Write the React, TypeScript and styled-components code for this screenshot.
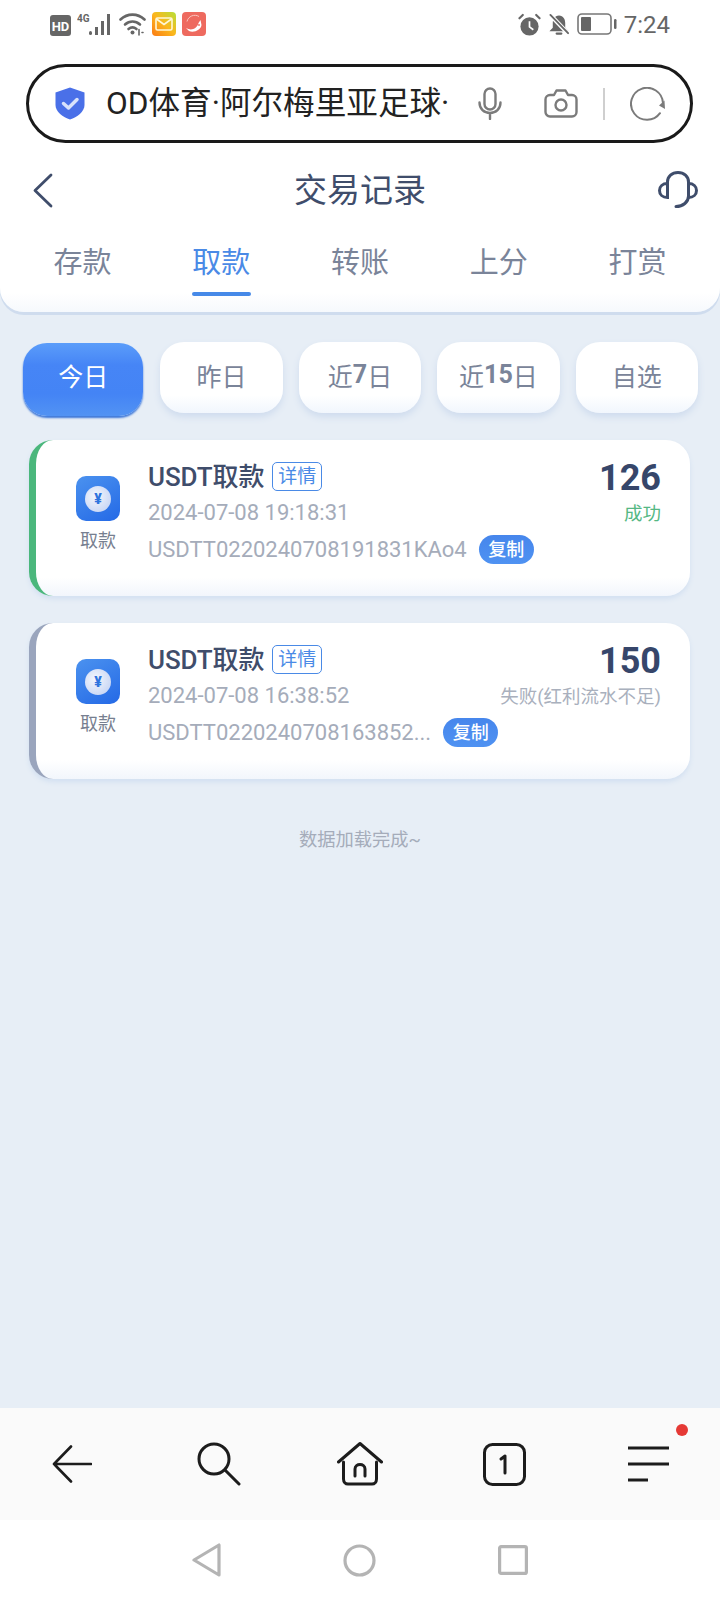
import { createGlobalStyle, styled } from "styled-components";

const GlobalStyle = createGlobalStyle`
  html, body {
    margin: 0;
    padding: 0;
    background: #e7eef6;
    font-family: Roboto, "Noto Sans CJK SC", sans-serif;
  }
  * { box-sizing: border-box; }
`;

const Page = styled.div`
  width: 720px;
  height: 1600px;
  display: flex;
  flex-direction: column;
  background: #e7eef6;
  overflow: hidden;
`;

const StatusBar = styled.div`
  height: 64px;
  flex: none;
  background: #fff;
  display: flex;
  justify-content: space-between;
  padding: 12px 50px 0;
  color: #666;
`;

const StatusGroup = styled.div<{ $gap: number }>`
  display: flex;
  align-items: flex-start;
  gap: ${(p) => p.$gap}px;
`;

const Clock = styled.span`
  font-size: 24px;
  line-height: 26px;
  color: #666;
`;

const UrlWrap = styled.div`
  flex: none;
  background: #fff;
  padding: 0 27px 7px 26px;
`;

const UrlBar = styled.div`
  height: 79px;
  border: 3px solid #1a1a1a;
  border-radius: 40px;
  display: flex;
  align-items: center;
  padding-left: 26px;
`;

const UrlText = styled.div`
  width: 352px;
  margin-left: 21px;
  white-space: nowrap;
  font-size: 31.6px;
  line-height: 42px;
  color: #222;
`;

const UrlActions = styled.div`
  display: flex;
  align-items: center;
  margin-left: 20px;
`;

const MicSlot = styled.span`
  display: flex;
  margin-right: 42px;
`;

const UrlDivider = styled.span`
  width: 2px;
  height: 32px;
  background: #cfcfcf;
  margin: 0 25px;
`;

const Header = styled.div`
  flex: none;
  height: 162px;
  background: linear-gradient(#fff 88%, #f6f9fd);
  border-radius: 0 0 24px 24px;
  box-shadow: 0 3px 0 #cfdcee;
`;

const TopBar = styled.div`
  height: 80px;
  display: grid;
  grid-template-columns: 1fr auto 1fr;
  align-items: center;
  padding: 0 22px;
`;

const BackSlot = styled.div`
  display: flex;
  margin-left: 11px;
`;

const Title = styled.h1`
  margin: 0 0 4px;
  font-size: 33px;
  font-weight: 400;
  color: #3f4d6b;
`;

const HeadsetSlot = styled.div`
  justify-self: end;
  display: flex;
`;

const Tabs = styled.div`
  display: grid;
  grid-template-columns: repeat(5, 1fr);
  padding: 0 13px;
`;

const Tab = styled.div<{ $active?: boolean }>`
  position: relative;
  height: 66px;
  line-height: 66px;
  text-align: center;
  font-size: 29px;
  color: ${(p) => (p.$active ? "#4a8ae6" : "#7a8499")};

  &::after {
    content: "";
    display: ${(p) => (p.$active ? "block" : "none")};
    position: absolute;
    left: 50%;
    bottom: 0;
    width: 59px;
    height: 4px;
    margin-left: -29px;
    border-radius: 2px;
    background: #4689e8;
  }
`;

const Filters = styled.div`
  display: grid;
  grid-template-columns: repeat(5, 1fr);
  gap: 16px;
  padding: 30px 22px 0;
  align-items: start;
`;

const Filter = styled.div<{ $active?: boolean }>`
  height: ${(p) => (p.$active ? 73 : 71)}px;
  margin: ${(p) => (p.$active ? "1px 1px 0" : "0")};
  padding-bottom: ${(p) => (p.$active ? 10 : 6)}px;
  border-radius: 24px;
  display: flex;
  align-items: center;
  justify-content: center;
  font-size: 25px;
  color: ${(p) => (p.$active ? "#fff" : "#7a8499")};
  background: ${(p) =>
    p.$active
      ? "linear-gradient(#5b9dfa, #4685f6 30%, #4484f5 70%, #5293f3)"
      : "linear-gradient(#fff 75%, #f1f6fd)"};
  box-shadow: ${(p) =>
    p.$active ? "0 2px 2px #3f78d8" : "0 4px 7px #cfdcee"};

  b {
    font-weight: 700;
  }
`;

const CardList = styled.div`
  display: flex;
  flex-direction: column;
  gap: 27px;
  padding: 24px 30px 0 29px;
`;

const Card = styled.div<{ $accent: string }>`
  height: 156px;
  display: flex;
  padding-left: 12px;
  border-left: 7px solid ${(p) => p.$accent};
  border-radius: 24px;
  background: linear-gradient(#fff 88%, #f2f6fc);
  box-shadow: 0 3px 5px #d3e0f1;
`;

const KindColumn = styled.div`
  width: 100px;
  flex: none;
  padding-top: 36px;
  display: flex;
  flex-direction: column;
  align-items: center;
`;

const CoinIcon = styled.div`
  width: 44px;
  height: 45px;
  border-radius: 10px;
  background: linear-gradient(150deg, #4b92ef, #2469e6);
  display: flex;
  align-items: center;
  justify-content: center;
`;

const Coin = styled.div`
  width: 26px;
  height: 26px;
  border-radius: 50%;
  background: radial-gradient(circle at 40% 40%, #f4f7fd, #bccdf2);
  color: #2f74de;
  font-size: 14px;
  font-weight: 900;
  line-height: 26px;
  text-align: center;
`;

const KindLabel = styled.div`
  margin-top: 8px;
  font-size: 18px;
  line-height: 24px;
  color: #777f90;
`;

const Info = styled.div`
  flex: 1;
  min-width: 0;
  padding-top: 18px;
`;

const NameRow = styled.div`
  height: 36px;
  display: flex;
  align-items: center;
`;

const Name = styled.span`
  margin-bottom: 3px;
  font-size: 26px;
  font-weight: 500;
  letter-spacing: -0.1px;
  color: #3f4d6b;
`;

const DetailTag = styled.span`
  width: 50px;
  height: 29px;
  margin-left: 8px;
  border: 1px solid #4a8ae6;
  border-radius: 5px;
  font-size: 19px;
  line-height: 27px;
  text-align: center;
  color: #4a8ae6;
`;

const MetaRow = styled.div`
  height: 37px;
  display: flex;
  align-items: center;
  font-size: 22px;
  color: #a5acba;
`;

const CopyTag = styled.span`
  width: 55px;
  height: 29px;
  margin-left: 12px;
  border-radius: 15px;
  background: linear-gradient(#4686ec, #4f92f2);
  font-size: 18px;
  font-weight: 500;
  line-height: 29px;
  text-align: center;
  color: #fff;
`;

const Result = styled.div`
  flex: none;
  padding: 15px 29px 0 0;
  text-align: right;
`;

const Amount = styled.div`
  font-size: 36px;
  font-weight: 700;
  line-height: 46px;
  color: #36466a;
`;

const ResultText = styled.div<{ $color: string }>`
  margin-top: 1px;
  font-size: 18.5px;
  line-height: 24px;
  color: ${(p) => p.$color};
`;

const LoadDone = styled.div`
  margin-top: 48px;
  text-align: center;
  font-size: 18.3px;
  line-height: 26px;
  color: #a5acba;
`;

const Spacer = styled.div`
  flex: 1;
`;

const BottomBar = styled.div`
  flex: none;
  height: 112px;
  background: #fafafa;
  display: grid;
  grid-template-columns: repeat(5, 1fr);
  align-items: center;
  justify-items: center;
`;

const NavItem = styled.div<{ $shift?: number }>`
  position: relative;
  display: flex;
  margin-left: ${(p) => p.$shift ?? 0}px;
`;

const RedDot = styled.span`
  position: absolute;
  top: -22px;
  right: -19px;
  width: 12px;
  height: 12px;
  border-radius: 50%;
  background: #e53935;
`;

const SysNav = styled.div`
  flex: none;
  height: 80px;
  background: #fff;
  display: flex;
  align-items: center;
  justify-content: center;
  gap: 122px;
`;

const Shield = () => (
  <svg width="30" height="33" viewBox="0 0 30 33">
    <path d="M15 0.5 29.5 5.5V18C29.5 25 22 30 15 32.5 8 30 0.5 25 0.5 18V5.5Z" fill="#4a70e8" strokeLinejoin="round" />
    <path d="M8.5 16.5 13.5 21 22 12.5" fill="none" stroke="#d8e2fb" strokeWidth="3.5" strokeLinecap="round" strokeLinejoin="round" />
  </svg>
);

const HdIcon = () => (
  <svg width="21" height="21" viewBox="0 0 21 21" style={{ marginTop: 3 }}>
    <rect width="21" height="21" rx="3" fill="#666" />
    <text x="10.5" y="15.5" textAnchor="middle" fontSize="13" fontWeight="700" fill="#fff" fontFamily="Roboto">HD</text>
  </svg>
);

const SignalIcon = () => (
  <svg width="36" height="24" viewBox="0 0 36 24">
    <text x="0" y="10" fontSize="10" fontWeight="700" fill="#666" fontFamily="Roboto">4G</text>
    <g fill="#666">
      <rect x="12" y="19" width="3" height="4" rx="1.5" />
      <rect x="18" y="15" width="3" height="8" />
      <rect x="24" y="9" width="3" height="14" />
      <rect x="30" y="2" width="3" height="21" />
    </g>
  </svg>
);

const WifiIcon = () => (
  <svg width="27" height="24" viewBox="0 0 27 24" fill="none" stroke="#666" strokeWidth="2.6" strokeLinecap="round">
    <path d="M1.5 7.5C8.5 1 18.5 1 25.5 7.5" />
    <path d="M6 12.5C10.5 8.5 16.5 8.5 21 12.5" />
    <path d="M9.5 17C12 15 15 15 17.5 17" />
    <circle cx="13.5" cy="20.5" r="2" fill="#666" stroke="none" />
    <path d="M20 17.5V23M23 20.5h1" strokeWidth="1.6" />
  </svg>
);

const MailApp = () => (
  <svg width="24" height="24" viewBox="0 0 24 24">
    <defs>
      <linearGradient id="mailBg" x1="1" y1="0" x2="0" y2="1">
        <stop offset="0" stopColor="#b6e03a" />
        <stop offset="0.5" stopColor="#fbb71d" />
        <stop offset="1" stopColor="#fb7a14" />
      </linearGradient>
    </defs>
    <rect width="24" height="24" rx="4" fill="url(#mailBg)" />
    <rect x="4" y="6" width="16" height="12" rx="1.5" fill="none" stroke="#fff8d8" strokeWidth="1.6" />
    <path d="M4.5 7 12 12.5 19.5 7" fill="none" stroke="#fff8d8" strokeWidth="1.6" />
  </svg>
);

const FoxApp = () => (
  <svg width="24" height="24" viewBox="0 0 24 24">
    <rect width="24" height="24" rx="4" fill="#ee6a5f" />
    <path d="M5 9.5A8 8 0 0 1 17 4.5" fill="none" stroke="#f9c6bf" strokeWidth="1" />
    <path d="M4 16C9 19 15 17 16.5 11L18.5 8 19.5 13C19 18 12 21 7 19Z" fill="#fff" />
    <circle cx="17" cy="13" r="0.9" fill="#ee6a5f" />
  </svg>
);

const AlarmIcon = () => (
  <svg width="23" height="24" viewBox="0 0 24 24" style={{ marginTop: 1 }}>
    <circle cx="12" cy="13.5" r="9.5" fill="#666" />
    <path d="M12 8v6l4 3" fill="none" stroke="#fff" strokeWidth="1.8" />
    <path d="M1.5 5 5 1.5M22.5 5 19 1.5" fill="none" stroke="#666" strokeWidth="2.2" strokeLinecap="round" />
  </svg>
);

const MutedBell = () => (
  <svg width="22" height="24" viewBox="0 0 23 24" style={{ marginTop: 1 }}>
    <path d="M11.5 2C7 2 5 6 5 10V15L1.5 18.5H21.5L18 15V10C18 6 16 2 11.5 2Z" fill="#666" />
    <path d="M9 21h5" stroke="#666" strokeWidth="2.2" strokeLinecap="round" />
    <path d="M2 1 21 21" stroke="#fff" strokeWidth="4.5" />
    <path d="M2.5 1.5 21 20.5" stroke="#666" strokeWidth="2" strokeLinecap="round" />
  </svg>
);

const Battery = () => (
  <svg width="40" height="22" viewBox="0 0 40 22" style={{ marginTop: 1 }}>
    <rect x="1" y="1" width="33" height="20" rx="4" fill="none" stroke="#777" strokeWidth="1.6" />
    <rect x="4" y="4" width="10" height="14" rx="1" fill="#666" />
    <rect x="37" y="6" width="2.5" height="10" rx="1.2" fill="#666" />
  </svg>
);

const MicIcon = () => (
  <svg width="24" height="33" viewBox="0 0 24 33" fill="none" stroke="#7b7b7b" strokeWidth="2.4" strokeLinecap="round">
    <rect x="6.5" y="1.5" width="11" height="21" rx="5.5" />
    <path d="M1.5 15.5C1.5 22 6 26 12 26S22.5 22 22.5 15.5M12 26v6" />
  </svg>
);

const CameraIcon = () => (
  <svg width="34" height="29" viewBox="0 0 34 29" fill="none" stroke="#7b7b7b" strokeWidth="2.4" strokeLinejoin="round">
    <path d="M6 6H10L12.5 1.5H21.5L24 6H28C30.5 6 32.5 8 32.5 10.5V23C32.5 25.5 30.5 27.5 28 27.5H6C3.5 27.5 1.5 25.5 1.5 23V10.5C1.5 8 3.5 6 6 6Z" />
    <circle cx="17" cy="16" r="5.5" />
  </svg>
);

const ReloadIcon = () => (
  <svg width="36" height="34" viewBox="0 0 36 34" fill="none">
    <path d="M30 26.2A16 16 0 1 1 33 16" stroke="#7b7b7b" strokeWidth="2" strokeLinecap="round" />
    <path d="M34.5 13.5 35 22 29 18.5Z" fill="#7b7b7b" />
  </svg>
);

const BackChevron = () => (
  <svg width="20" height="35" viewBox="0 0 20 35" fill="none" stroke="#3f4d6b" strokeWidth="2.8" strokeLinecap="round" strokeLinejoin="round">
    <path d="M18 2 2 17.5 18 33" />
  </svg>
);

const HeadsetIcon = () => (
  <svg width="40" height="38" viewBox="0 0 40 38" fill="none" stroke="#3f4d6b" strokeWidth="3" strokeLinecap="round">
    <path d="M9.5 14V11C9.5 5.5 14 1.5 20 1.5S30.5 5.5 30.5 11V25C30.5 31 25 35.5 18 35.5" />
    <path d="M9.5 12.5C4.5 12.5 1.5 15.5 1.5 19.5S4.5 26.5 9.5 26.5Z" />
    <path d="M30.5 12.5C35.5 12.5 38.5 15.5 38.5 19.5S35.5 26.5 30.5 26.5Z" />
  </svg>
);

const NavBack = () => (
  <svg width="40" height="38" viewBox="0 0 40 38" fill="none" stroke="#1c1c1c" strokeWidth="2.6" strokeLinecap="round" strokeLinejoin="round">
    <path d="M19 1.5 2 19 19 36.5M2 19H39" />
  </svg>
);

const NavSearch = () => (
  <svg width="44" height="44" viewBox="0 0 44 44" fill="none" stroke="#1c1c1c" strokeWidth="3" strokeLinecap="round">
    <circle cx="17" cy="17" r="15" />
    <path d="M28 28 42 42" />
  </svg>
);

const NavHome = () => (
  <svg width="46" height="44" viewBox="0 0 46 44" fill="none" stroke="#1c1c1c" strokeWidth="3" strokeLinecap="round" strokeLinejoin="round">
    <path d="M1.5 20 23 1.5 44.5 20" />
    <path d="M6.5 20V37C6.5 40 8.5 42 11 42H35C37.5 42 39.5 40 39.5 37V20" />
    <path d="M18 34V27C18 21 28 21 28 27V34" />
  </svg>
);

const NavTabs = () => (
  <svg width="43" height="43" viewBox="0 0 43 43" fill="none" stroke="#1c1c1c" strokeWidth="3" strokeLinecap="round" strokeLinejoin="round">
    <rect x="1.5" y="1.5" width="40" height="40" rx="8" />
    <path d="M18 16 22 13V30" />
  </svg>
);

const NavMenu = () => (
  <svg width="41" height="36" viewBox="0 0 41 36" stroke="#1c1c1c" strokeWidth="3">
    <path d="M0 2H41M0 18H41M0 34H20" />
  </svg>
);

const SysBack = () => (
  <svg width="29" height="34" viewBox="0 0 29 34" fill="none" stroke="#b4b4b4" strokeWidth="3.2" strokeLinejoin="round">
    <path d="M27 2V32L2 17Z" />
  </svg>
);

const SysHome = () => (
  <svg width="33" height="33" viewBox="0 0 33 33" fill="none" stroke="#b4b4b4" strokeWidth="3.2">
    <circle cx="16.5" cy="16.5" r="14.5" />
  </svg>
);

const SysRecent = () => (
  <svg width="30" height="30" viewBox="0 0 30 30" fill="none" stroke="#b4b4b4" strokeWidth="3.2" strokeLinejoin="round">
    <rect x="1.6" y="1.6" width="26.8" height="26.8" rx="1.5" />
  </svg>
);

const tabs = ["存款", "取款", "转账", "上分", "打赏"];

const records = [
  {
    amount: "126",
    time: "2024-07-08 19:18:31",
    order: "USDTT0220240708191831KAo4",
    status: "成功",
    statusColor: "#55b884",
    accent: "#4bb77c",
  },
  {
    amount: "150",
    time: "2024-07-08 16:38:52",
    order: "USDTT0220240708163852...",
    status: "失败(红利流水不足)",
    statusColor: "#a9b0bd",
    accent: "#9aa5bd",
  },
];

const App = () => {
  return (
    <Page>
      <GlobalStyle />
      <StatusBar>
        <StatusGroup $gap={6}>
          <HdIcon />
          <SignalIcon />
          <WifiIcon />
          <MailApp />
          <FoxApp />
        </StatusGroup>
        <StatusGroup $gap={7}>
          <AlarmIcon />
          <MutedBell />
          <Battery />
          <Clock>7:24</Clock>
        </StatusGroup>
      </StatusBar>

      <UrlWrap>
        <UrlBar>
          <Shield />
          <UrlText>OD体育·阿尔梅里亚足球·</UrlText>
          <UrlActions>
            <MicSlot>
              <MicIcon />
            </MicSlot>
            <CameraIcon />
            <UrlDivider />
            <ReloadIcon />
          </UrlActions>
        </UrlBar>
      </UrlWrap>

      <Header>
        <TopBar>
          <BackSlot>
            <BackChevron />
          </BackSlot>
          <Title>交易记录</Title>
          <HeadsetSlot>
            <HeadsetIcon />
          </HeadsetSlot>
        </TopBar>
        <Tabs>
          {tabs.map((t) => (
            <Tab key={t} $active={t === "取款"}>
              {t}
            </Tab>
          ))}
        </Tabs>
      </Header>

      <Filters>
        <Filter $active>今日</Filter>
        <Filter>昨日</Filter>
        <Filter>
          近<b>7</b>日
        </Filter>
        <Filter>
          近<b>15</b>日
        </Filter>
        <Filter>自选</Filter>
      </Filters>

      <CardList>
        {records.map((r) => (
          <Card key={r.order} $accent={r.accent}>
            <KindColumn>
              <CoinIcon>
                <Coin>¥</Coin>
              </CoinIcon>
              <KindLabel>取款</KindLabel>
            </KindColumn>
            <Info>
              <NameRow>
                <Name>USDT取款</Name>
                <DetailTag>详情</DetailTag>
              </NameRow>
              <MetaRow>{r.time}</MetaRow>
              <MetaRow>
                {r.order}
                <CopyTag>复制</CopyTag>
              </MetaRow>
            </Info>
            <Result>
              <Amount>{r.amount}</Amount>
              <ResultText $color={r.statusColor}>{r.status}</ResultText>
            </Result>
          </Card>
        ))}
      </CardList>

      <LoadDone>数据加载完成~</LoadDone>
      <Spacer />

      <BottomBar>
        <NavItem>
          <NavBack />
        </NavItem>
        <NavItem $shift={5}>
          <NavSearch />
        </NavItem>
        <NavItem>
          <NavHome />
        </NavItem>
        <NavItem>
          <NavTabs />
        </NavItem>
        <NavItem>
          <NavMenu />
          <RedDot />
        </NavItem>
      </BottomBar>

      <SysNav>
        <SysBack />
        <SysHome />
        <SysRecent />
      </SysNav>
    </Page>
  );
};

export default App;
